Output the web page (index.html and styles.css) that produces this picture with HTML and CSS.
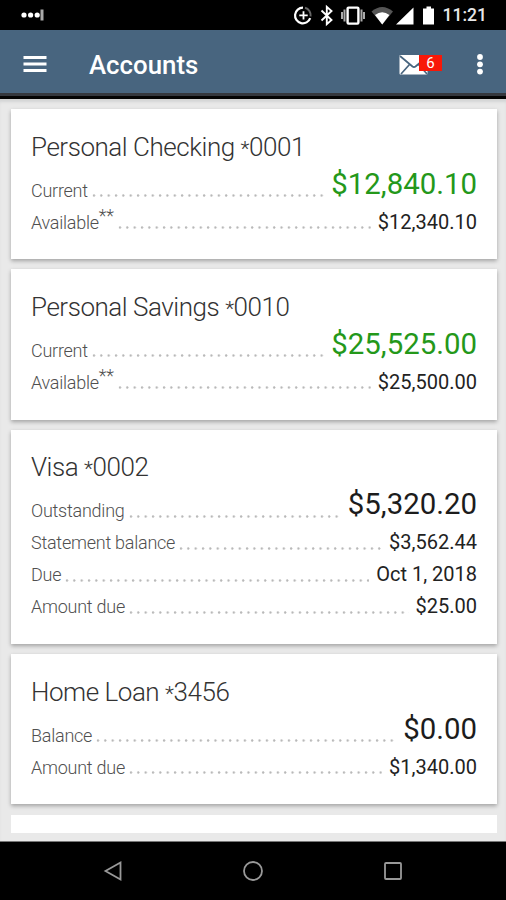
FILE: index.html
```html
<!doctype html>
<html>
<head>
<meta charset="utf-8">
<meta name="viewport" content="width=device-width, initial-scale=1">
<title>Accounts</title>
<link rel="stylesheet" href="styles.css">
</head>
<body>

<div class="status">
  <svg width="24" height="14" viewBox="0 0 24 14">
    <g fill="#fff"><circle cx="3" cy="7" r="2.6"/><circle cx="9.6" cy="7" r="2.6"/><circle cx="16.2" cy="7" r="2.6"/></g>
    <path fill="#aaa" d="M19.5 1.5h3v11h-3z"/>
  </svg>
  <svg class="tray" width="150" height="24" viewBox="291 3 150 24">
    <g fill="none" stroke="#fff">
      <path stroke-width="2.2" d="M303 7.7a7.8 7.8 0 1 0 7.2 10.4"/>
      <path stroke="#666" stroke-width="2" d="M305 7.8a7.8 7.8 0 0 1 5.6 8.6"/>
      <path stroke-width="1.8" d="M303.5 11.2v8.4M299.3 15.4h8.4"/>
      <path stroke-width="1.9" d="M321.5 10.5l10 9.5-4.7 4.2V6.8l4.7 4.2-10 9.5"/>
      <rect x="347.6" y="7.6" width="10.8" height="16" rx="1" stroke-width="2.4"/>
      <path stroke="#aaa" stroke-width="2" d="M344.5 9.5v12M361.5 9.5v12M342 12v7M364 12v7"/>
    </g>
    <path fill="#555" d="M371.5 11.5q10.7-9 21.5 0l-10.7 13z"/>
    <path fill="#fff" d="M375 15q7.2-5.5 14.4 0l-7.2 9.5zM413.5 7.5v17h-17.5z"/>
    <path fill="#fff" d="M423 8.5h3.5v-2h4.5v2h3v16h-11z"/>
  </svg>
  <span class="clock">11:21</span>
</div>

<div class="appbar">
  <svg width="24" height="20" viewBox="0 0 24 20">
    <path fill="#fff" d="M.5 1h23v3h-23zM.5 7.5h23v3h-23zM.5 14h23v3h-23z"/>
  </svg>
  <h1>Accounts</h1>
  <div class="mail">
    <svg width="30" height="22" viewBox="0 0 30 22">
      <rect x=".5" y="1" width="28" height="19.5" rx="1" fill="#fff"/>
      <path fill="none" stroke="#48657f" stroke-width="1.7" d="M1 2l12.5 10.5q1.500 1.2 3 0L29 2M2 20l8.5-9.5M28 20l-8.5-9.5"/>
    </svg>
    <span class="badge">6</span>
  </div>
  <svg width="8" height="22" viewBox="0 0 8 22">
    <g fill="#fff"><circle cx="4" cy="3" r="2.9"/><circle cx="4" cy="10.3" r="2.9"/><circle cx="4" cy="17.6" r="2.9"/></g>
  </svg>
</div>

<div class="accounts">
  <div class="card">
    <h2>Personal Checking <small>*</small>0001</h2>
    <div class="row"><span class="label">Current</span><i></i><span class="total green">$12,840.10</span></div>
    <div class="row"><span class="label">Available<sup>**</sup></span><i></i><span class="amount">$12,340.10</span></div>
  </div>
  <div class="card">
    <h2>Personal Savings <small>*</small>0010</h2>
    <div class="row"><span class="label">Current</span><i></i><span class="total green">$25,525.00</span></div>
    <div class="row"><span class="label">Available<sup>**</sup></span><i></i><span class="amount">$25,500.00</span></div>
  </div>
  <div class="card">
    <h2>Visa <small>*</small>0002</h2>
    <div class="row"><span class="label">Outstanding</span><i></i><span class="total">$5,320.20</span></div>
    <div class="row"><span class="label">Statement balance</span><i></i><span class="amount">$3,562.44</span></div>
    <div class="row"><span class="label">Due</span><i></i><span class="amount">Oct 1, 2018</span></div>
    <div class="row"><span class="label">Amount due</span><i></i><span class="amount">$25.00</span></div>
  </div>
  <div class="card">
    <h2>Home Loan <small>*</small>3456</h2>
    <div class="row"><span class="label">Balance</span><i></i><span class="total">$0.00</span></div>
    <div class="row"><span class="label">Amount due</span><i></i><span class="amount">$1,340.00</span></div>
  </div>
  <div class="card next"></div>
</div>

<div class="navbar">
  <svg width="20" height="22" viewBox="0 0 20 22"><path d="M17.5 2.5v17L2.5 11z"/></svg>
  <svg width="22" height="22" viewBox="0 0 22 22"><circle cx="11" cy="11" r="9"/></svg>
  <svg width="20" height="22" viewBox="0 0 20 22"><rect x="2" y="3" width="16" height="16" rx="1"/></svg>
</div>

</body>
</html>
```
FILE: styles.css
```css
body {
  margin: 0;
  height: 900px;
  display: flex;
  flex-direction: column;
  overflow: hidden;
  background-color: #e9e9e9;
  font-family: Roboto, sans-serif;
}
svg {
  display: block;
  flex: none;
}
.status {
  box-sizing: border-box;
  height: 30px;
  flex: none;
  display: flex;
  align-items: center;
  padding: 0 19px 0 21px;
  background-color: #000;
  color: #e8e8e8;
}
.tray {
  margin-left: auto;
}
.clock {
  margin-left: 2px;
  font-size: 17.5px;
  font-weight: 500;
  line-height: 34px;
}
.appbar {
  box-sizing: border-box;
  height: 69px;
  flex: none;
  display: flex;
  align-items: center;
  padding: 4px 22px 0 23px;
  background-color: #48657f;
  border-bottom: 3px solid #050505;
  box-shadow: inset 0 -3px #35383e;
  color: #fff;
}
.appbar h1 {
  margin: 0 auto 0 42px;
  font-size: 25.8px;
  font-weight: 500;
}
.mail {
  position: relative;
  margin-right: 47px;
}
.badge {
  position: absolute;
  left: 20px;
  top: 1px;
  width: 23px;
  height: 16px;
  background-color: #f81808;
  font-size: 15px;
  line-height: 17px;
  text-align: center;
}
.accounts {
  box-sizing: border-box;
  height: 742px;
  flex: none;
  overflow: hidden;
  padding: 10px 9px 0 11px;
  box-shadow: inset 0 4px 3px -1px #d3d4d5;
}
.card {
  box-sizing: border-box;
  margin-bottom: 10.1px;
  padding: 20.5px 20px 20.8px;
  background-color: #fff;
  box-shadow: 0 2px 4px rgba(0, 0, 0, .3);
}
.card h2 {
  margin: 0 0 10px;
  color: #333;
  font-size: 26px;
  font-weight: 300;
  letter-spacing: -.46px;
  line-height: 35px;
}
.card small {
  font-size: 21px;
  line-height: 1;
}
.row {
  display: flex;
  height: 32px;
  line-height: 32px;
  white-space: nowrap;
}
.label {
  color: #505050;
  font-size: 18px;
  font-weight: 300;
  letter-spacing: -.25px;
}
.label sup {
  font-size: 18px;
  line-height: 0;
}
/* dotted leader between label and value */
.row i {
  flex: 1;
  height: 3px;
  margin: 19.5px 7px 0 4px;
  background: radial-gradient(circle at 2px 1.5px, #b8b8b8 .8px, transparent 1.6px) 0 0 / 7.35px 3px repeat-x;
}
.amount {
  color: #222;
  font-size: 20px;
  line-height: 31px;
}
.total {
  color: #1c1c1c;
  font-size: 29.4px;
  line-height: 19px;
}
.green {
  color: #24981a;
}
.next {
  height: 18px;
  padding: 0;
  box-shadow: none;
}
.navbar {
  flex: 1;
  display: flex;
  align-items: center;
  justify-content: space-between;
  padding: 0 103px;
  background-color: #000;
  border-top: 1px solid #777;
}
.navbar svg {
  fill: none;
  stroke: #999;
  stroke-width: 1.8;
}
```
